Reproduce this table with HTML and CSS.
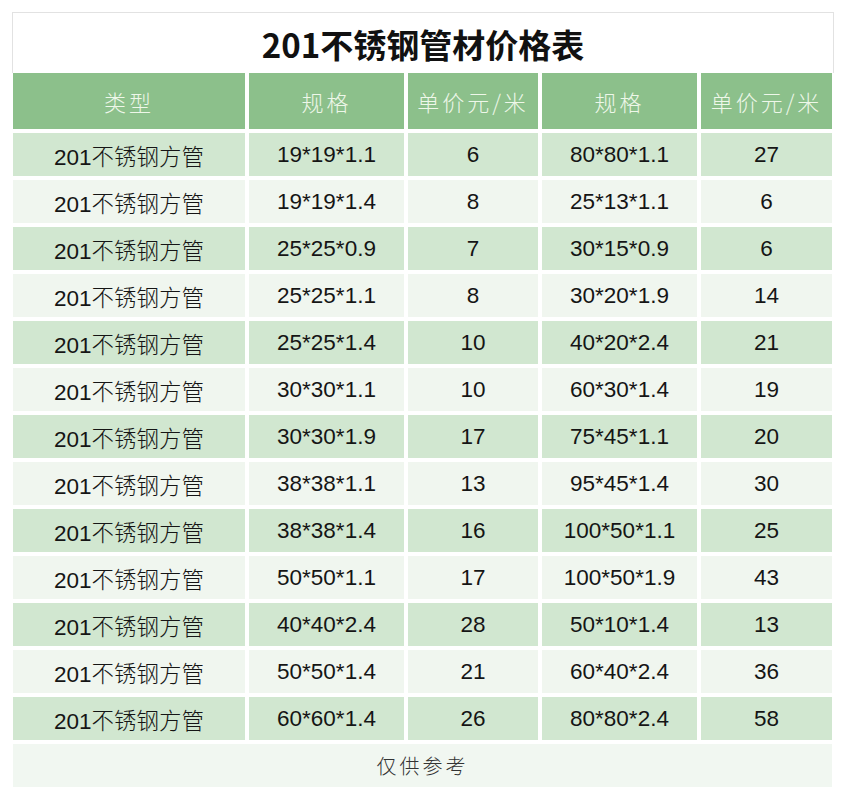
FILE: index.html
```html
<!DOCTYPE html>
<html lang="zh">
<head>
<meta charset="utf-8">
<link rel="stylesheet" href="styles.css">
</head>
<body>
<div class="page">
  <div class="title">201不锈钢管材价格表</div>
  <div class="grid">
    <div class="h">类型</div><div class="h">规格</div><div class="h">单价元/米</div><div class="h">规格</div><div class="h">单价元/米</div>
    <div class="c o">201不锈钢方管</div><div class="c o">19*19*1.1</div><div class="c o">6</div><div class="c o">80*80*1.1</div><div class="c o">27</div>
    <div class="c e">201不锈钢方管</div><div class="c e">19*19*1.4</div><div class="c e">8</div><div class="c e">25*13*1.1</div><div class="c e">6</div>
    <div class="c o">201不锈钢方管</div><div class="c o">25*25*0.9</div><div class="c o">7</div><div class="c o">30*15*0.9</div><div class="c o">6</div>
    <div class="c e">201不锈钢方管</div><div class="c e">25*25*1.1</div><div class="c e">8</div><div class="c e">30*20*1.9</div><div class="c e">14</div>
    <div class="c o">201不锈钢方管</div><div class="c o">25*25*1.4</div><div class="c o">10</div><div class="c o">40*20*2.4</div><div class="c o">21</div>
    <div class="c e">201不锈钢方管</div><div class="c e">30*30*1.1</div><div class="c e">10</div><div class="c e">60*30*1.4</div><div class="c e">19</div>
    <div class="c o">201不锈钢方管</div><div class="c o">30*30*1.9</div><div class="c o">17</div><div class="c o">75*45*1.1</div><div class="c o">20</div>
    <div class="c e">201不锈钢方管</div><div class="c e">38*38*1.1</div><div class="c e">13</div><div class="c e">95*45*1.4</div><div class="c e">30</div>
    <div class="c o">201不锈钢方管</div><div class="c o">38*38*1.4</div><div class="c o">16</div><div class="c o">100*50*1.1</div><div class="c o">25</div>
    <div class="c e">201不锈钢方管</div><div class="c e">50*50*1.1</div><div class="c e">17</div><div class="c e">100*50*1.9</div><div class="c e">43</div>
    <div class="c o">201不锈钢方管</div><div class="c o">40*40*2.4</div><div class="c o">28</div><div class="c o">50*10*1.4</div><div class="c o">13</div>
    <div class="c e">201不锈钢方管</div><div class="c e">50*50*1.4</div><div class="c e">21</div><div class="c e">60*40*2.4</div><div class="c e">36</div>
    <div class="c o">201不锈钢方管</div><div class="c o">60*60*1.4</div><div class="c o">26</div><div class="c o">80*80*2.4</div><div class="c o">58</div>
    <div class="foot">仅供参考</div>
  </div>
</div>
</body>
</html>
```
FILE: styles.css
```css
html, body {
  margin: 0;
  padding: 0;
  background: #ffffff;
}
.page {
  padding-top: 12px;
  font-family: "Liberation Sans", "Noto Sans CJK SC", sans-serif;
}
.title {
  box-sizing: border-box;
  margin-left: 12px;
  width: 822px;
  height: 61px;
  border: 1px solid #e2e2e2;
  border-bottom: none;
  display: flex;
  align-items: center;
  justify-content: center;
  font-family: "Noto Sans CJK SC", sans-serif;
  font-weight: 700;
  font-size: 33px;
  color: #111;
  padding-top: 2px;
}
.grid {
  margin-left: 13px;
  display: grid;
  grid-template-columns: 232px 155px 130px 155px 131px;
  grid-template-rows: 56px;
  grid-auto-rows: 43px;
  column-gap: 4px;
  row-gap: 4px;
}
.h {
  background: #8cc08b;
  color: #eef7e9;
  font-family: "Noto Sans CJK SC", sans-serif;
  font-weight: 300;
  font-size: 22px;
  letter-spacing: 3px;
  display: flex;
  align-items: center;
  justify-content: center;
}
.c {
  display: flex;
  align-items: center;
  justify-content: center;
  font-size: 22.5px;
  font-weight: 300;
  color: #151515;
}
.o { background: #d1e7d0; }
.e { background: #f0f6ef; }
.foot {
  grid-column: 1 / -1;
  background: #f1f7f1;
  display: flex;
  align-items: center;
  justify-content: center;
  font-family: "Noto Sans CJK SC", sans-serif;
  font-weight: 300;
  font-size: 20px;
  letter-spacing: 3px;
  color: #333;
}
```
